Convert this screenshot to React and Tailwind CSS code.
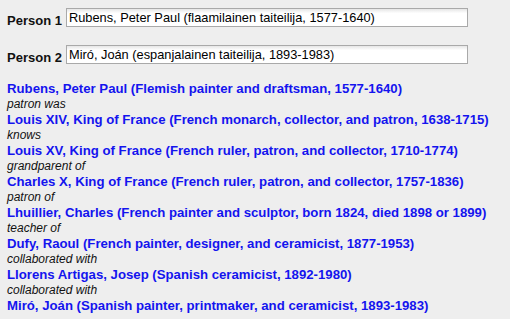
const people = [
  { label: "Person 1", value: "Rubens, Peter Paul (flaamilainen taiteilija, 1577-1640)" },
  { label: "Person 2", value: "Miró, Joán (espanjalainen taiteilija, 1893-1983)" },
];

const chain = [
  "Rubens, Peter Paul (Flemish painter and draftsman, 1577-1640)",
  "patron was",
  "Louis XIV, King of France (French monarch, collector, and patron, 1638-1715)",
  "knows",
  "Louis XV, King of France (French ruler, patron, and collector, 1710-1774)",
  "grandparent of",
  "Charles X, King of France (French ruler, patron, and collector, 1757-1836)",
  "patron of",
  "Lhuillier, Charles (French painter and sculptor, born 1824, died 1898 or 1899)",
  "teacher of",
  "Dufy, Raoul (French painter, designer, and ceramicist, 1877-1953)",
  "collaborated with",
  "Llorens Artigas, Josep (Spanish ceramicist, 1892-1980)",
  "collaborated with",
  "Miró, Joán (Spanish painter, printmaker, and ceramicist, 1893-1983)",
];

export default function App() {
  return (
    <div className="min-h-[319px] w-[510px] bg-[#eeeeee] pl-[7px] pt-[7px] font-['Liberation_Sans',Arial,sans-serif] text-black">
      {people.map((p, i) => (
        <div key={p.label} className={`flex items-center ${i > 0 ? "mt-[16px]" : ""}`}>
          <span className="w-[59px] pt-[6px] text-[13px] font-bold leading-[15px] text-[#111]">{p.label}</span>
          <input
            readOnly
            value={p.value}
            className="h-[19px] w-[402px] border border-[#a9a9a9] bg-gradient-to-b from-[#e6e6e6] via-white via-[25%] to-white px-[2px] text-[12.8px] leading-[17px] text-black outline-none"
          />
        </div>
      ))}

      <div className="mt-[16px]">
        {chain.map((t, i) =>
          i % 2 === 0 ? (
            <a key={i} href="#" className="block text-[13.2px] font-bold leading-[16px] text-[#1414ee] no-underline">
              {t}
            </a>
          ) : (
            <div key={i} className="text-[12px] italic leading-[15px] text-[#111]">
              {t}
            </div>
          )
        )}
      </div>
    </div>
  );
}
